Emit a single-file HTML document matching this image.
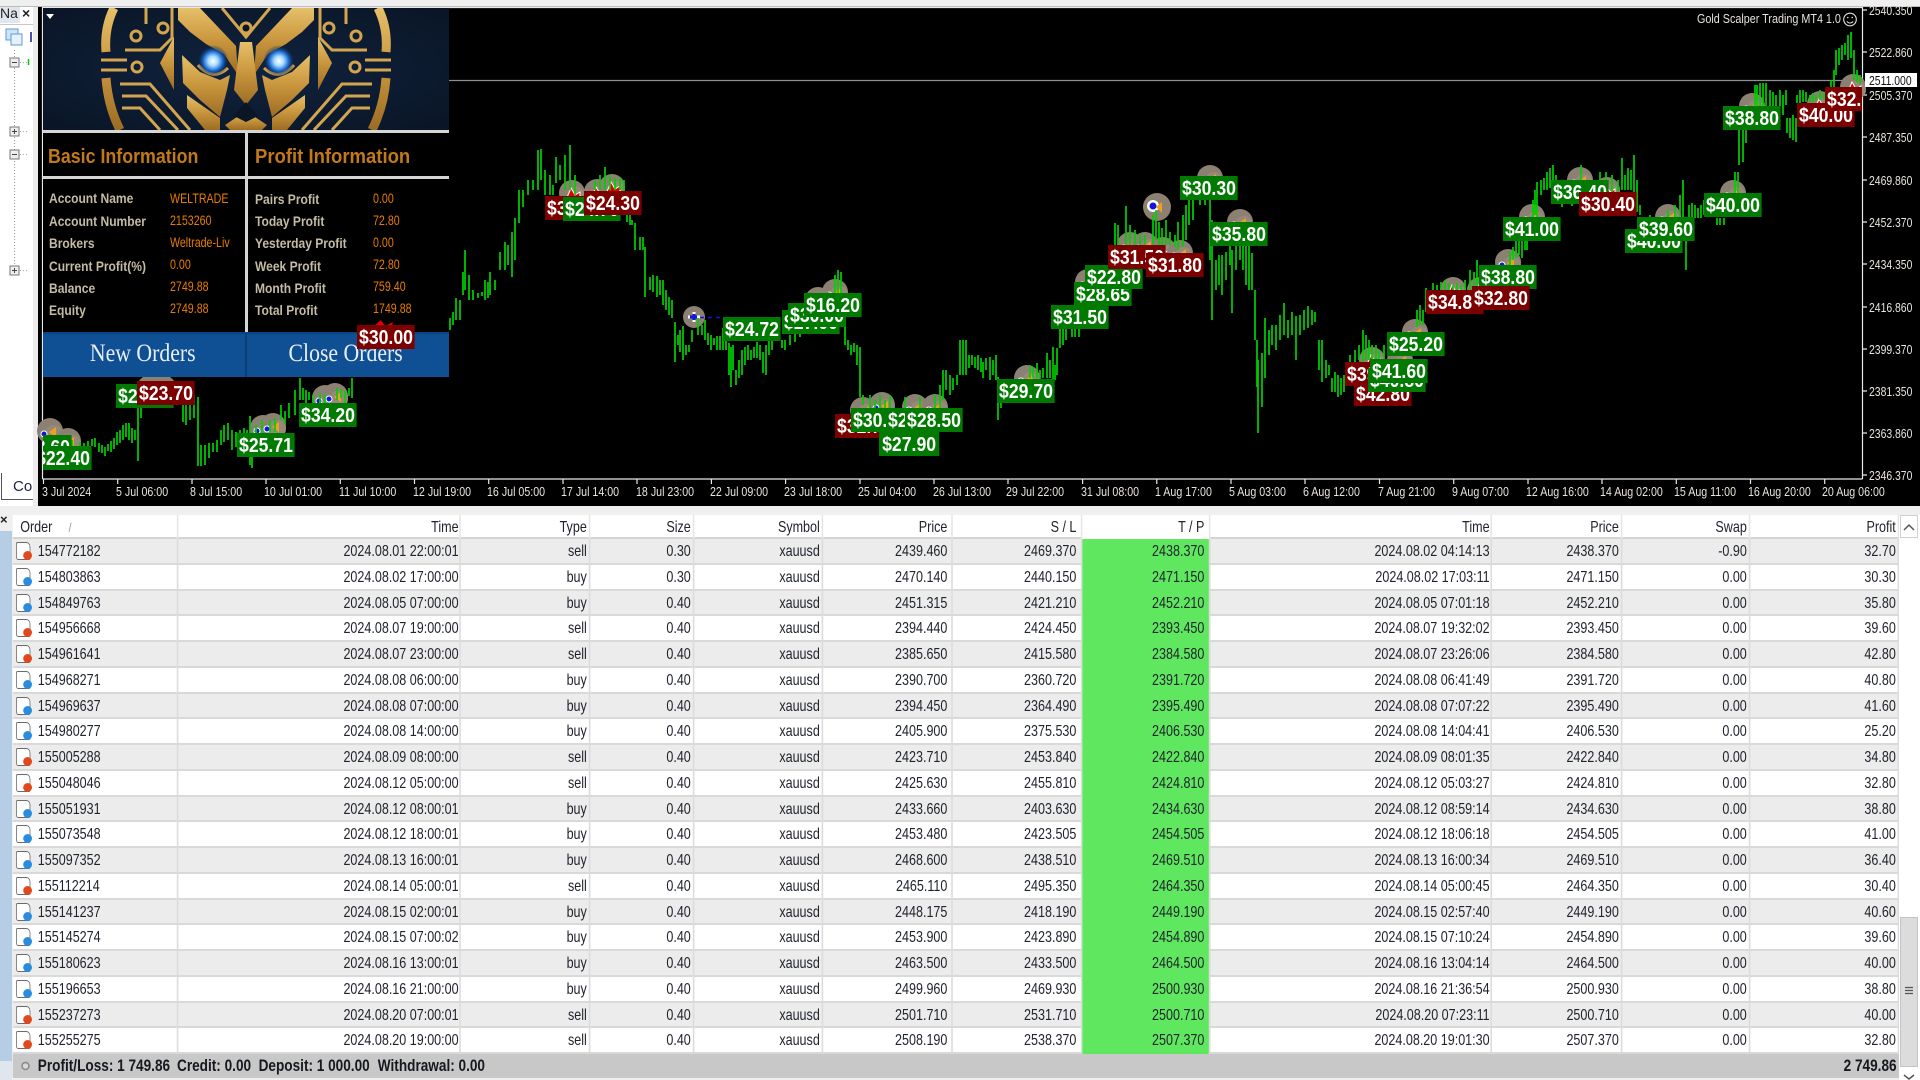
<!DOCTYPE html>
<html><head><meta charset="utf-8"><title>MT4</title>
<style>
html,body{margin:0;padding:0;width:1920px;height:1080px;overflow:hidden;background:#f0f0f0;font-family:"Liberation Sans",sans-serif}
.a{position:absolute}
#chart{position:absolute;left:38px;top:0;width:1882px;height:506px;background:#000}
svg{position:absolute;left:0;top:0;overflow:visible}
#clip{position:absolute;left:0;top:0;width:1920px;height:1080px;clip-path:inset(8px 58px 602px 43px)}
.g,.d{position:absolute;width:67.4px;height:24px;line-height:25px;font-size:20.5px;font-weight:bold;color:#fff;text-align:center;transform:scaleX(.86);transform-origin:0 0;white-space:nowrap;overflow:hidden}
.g{background:#007a00}.d{background:#7d0000}
.t{position:absolute;top:484px;color:#e8e4dc;font-size:13px;line-height:15px;transform:scaleX(.82);transform-origin:0 0;white-space:nowrap}
.p{position:absolute;left:1869px;color:#e8e4dc;font-size:13px;line-height:15px;transform:scaleX(.8);transform-origin:0 0;white-space:nowrap}
#panel{position:absolute;left:43px;top:8px;width:406px;height:369px;background:#000;overflow:hidden}
.hl{position:absolute;background:#d6d6d6}
.h{position:absolute;top:137px;font-size:20px;font-weight:bold;color:#c27a18;transform-origin:0 0;white-space:nowrap;line-height:24px}
.k{position:absolute;font-size:14px;font-weight:bold;color:#c4bba4;transform:scaleX(.86);transform-origin:0 0;white-space:nowrap;line-height:16px}
.v{position:absolute;font-size:13.5px;color:#e87c00;transform:scaleX(.79);transform-origin:0 0;white-space:nowrap;line-height:16px}
.btn{position:absolute;top:324px;height:45px;background:#0f4f93;color:#e8eef6;font-family:"Liberation Serif",serif;font-size:25px;line-height:43px;text-align:center}
.btn span{display:inline-block;transform:scaleX(.87)}
#tbl{position:absolute;left:0;top:515px;width:2400px;height:565px;transform:scaleX(.8);transform-origin:0 0;font-size:15.7px;color:#20242c}
.r{position:absolute;left:16.25px;display:grid;grid-template-columns:206.25px 353.75px 161.25px 130px 161.25px 162.5px 161.25px 160px 352.5px 162.5px 160px 186.25px;height:25.76px;line-height:26px;background:#fff;box-sizing:border-box;border-bottom:2px solid #d9d9d9}
.r span{text-align:right;padding-right:2px;border-right:2px solid #dcdcdc;white-space:nowrap;overflow:hidden}
.r span:nth-child(2),.r span:nth-child(9){padding-right:1px}
.r span:nth-child(6),.r span:nth-child(7),.r span:nth-child(8){padding-right:5px}
.r span:first-child{text-align:left;padding-left:31px;position:relative;overflow:visible}
.r.o{background:#ececec}
.r span:nth-child(8){background:#5fe85f}
.hd{background:#fff;height:24px;border-bottom:2px solid #d4d4d4}
.hd span{border-right:2px solid #e6e6e6}
.hd span:nth-child(8){background:#fff}
.hd span:first-child{padding-left:9px}
.i{display:block;position:absolute;left:4px;top:3px;width:16px;height:16px;border:1.5px solid #6a6a6a;border-radius:2px 5px 2px 3px;background:#fff}
.i::after{content:"";position:absolute;right:-3px;bottom:-1px;width:11px;height:9px;border-radius:50%;background:#e2481c}
.b::after{background:#2a8ce0}
#sum{position:absolute;left:16.25px;top:539px;width:2357.5px;height:24px;background:#c8c8c8;line-height:24px;font-weight:bold;font-size:17px;color:#15181e}
#sum span{position:absolute;white-space:nowrap}
</style></head><body>

<!-- top strip and left navigator -->
<div class="a" style="left:0;top:0;width:38px;height:506px;background:#fff"></div>
<div class="a" style="left:33px;top:0;width:5px;height:506px;background:#ececec"></div>
<div class="a" style="left:0;top:4px;width:20px;height:19px;background:#dfe6ee;font-size:14px;line-height:19px;overflow:hidden;color:#222">Na</div>
<div class="a" style="left:22px;top:5px;font-size:14px;line-height:17px;font-weight:bold;color:#222">×</div>
<div class="a" style="left:0;top:24px;width:33px;height:1px;background:#c8c8c8"></div>
<svg width="40" height="300" viewBox="0 0 40 300">
<rect x="6" y="29" width="12" height="11" fill="#cfe3f5" stroke="#5b9bd5"/><rect x="11" y="34" width="11" height="11" fill="#e6f1fb" stroke="#5b9bd5"/>
<path d="M31 32V42" stroke="#5050a8" stroke-width="2"/>
<path d="M14.5 50V264" stroke="#999" stroke-dasharray="1 2"/>
<g fill="#eee" stroke="#777"><rect x="10" y="58" width="9" height="9"/><rect x="10" y="127" width="9" height="9"/><rect x="10" y="150" width="9" height="9"/><rect x="10" y="266" width="9" height="9"/></g>
<path d="M12 62.5h5M12 131.5h5M14.5 129v5M12 154.5h5M12 270.5h5M14.500 268v5" stroke="#444"/>
<path d="M20 62.5h8M20 131.5h7M20 154.5h7M20 270.5h7" stroke="#aaa" stroke-dasharray="1 2"/>
<path d="M28.5 59v6" stroke="#0c0" stroke-width="1.5"/>
</svg>
<div class="a" style="left:1px;top:473px;width:32px;height:27px;background:#fff;border-left:1px solid #555;border-bottom:1px solid #555;box-sizing:border-box;font-size:15px;line-height:28px;padding-left:11px;overflow:hidden;color:#224">Cor</div>

<!-- chart -->
<div id="chart"></div>
<div class="a" style="left:0;top:0;width:1920px;height:6px;background:#efefef;border-bottom:1px solid #bbb"></div>
<svg width="1920" height="1080" viewBox="0 0 1920 1080">
<defs>
<g id="bb"><circle r="13" fill="#8b8072"/><circle cx="4" cy="3" r="9" fill="#97897a"/><path d="M6-4V6L-1 1Z" fill="#f0a020"/><circle cx="-6" cy="3" r="3" fill="#1414e0" stroke="#fff"/></g>
<g id="ss"><circle r="13" fill="#8b8072"/><circle cx="4" cy="3" r="9" fill="#97897a"/><path d="M-6 7L-1-5 3 2 8-1V7Z" fill="#e00000" stroke="#fff"/></g>
</defs>
<path d="M42.5 479V7.5H1862.5V479M42.5 479H1862.5" fill="none" stroke="#e8e8e8" stroke-width="1.2"/>
<path d="M448 80.5H1862" stroke="#8a8f96" stroke-width="1.3"/>
<path d="M1862 10h5M1862 52h5M1862 95h5M1862 137h5M1862 180h5M1862 222h5M1862 264h5M1862 307h5M1862 349h5M1862 391h5M1862 433h5M1862 475h5M43.5 479v5M117.7 479v5M192 479v5M266 479v5M340.3 479v5M414.5 479v5M488.7 479v5M563 479v5M637 479v5M711.4 479v5M785.6 479v5M860 479v5M934 479v5M1008 479v5M1082.6 479v5M1156.8 479v5M1231 479v5M1305 479v5M1379.5 479v5M1453.7 479v5M1528 479v5M1602 479v5M1676.3 479v5M1750.5 479v5M1824.7 479v5" stroke="#e8e8e8" stroke-width="1.2"/>
<g>
<use href="#bb" x="50" y="431"/><use href="#bb" x="68" y="441"/><use href="#ss" x="150" y="388"/><use href="#ss" x="163" y="388"/><use href="#bb" x="263" y="428"/><use href="#bb" x="273" y="426"/><use href="#bb" x="325" y="398"/><use href="#bb" x="335" y="396"/>
<use href="#ss" x="572" y="193"/><use href="#ss" x="597" y="192"/><use href="#ss" x="612" y="187"/>
<use href="#bb" x="835" y="292"/><use href="#bb" x="818" y="300"/><use href="#bb" x="863" y="410"/><use href="#bb" x="882" y="405"/><use href="#bb" x="915" y="407"/><use href="#bb" x="935" y="407"/>
<use href="#bb" x="1027" y="378"/><use href="#bb" x="1088" y="282"/><use href="#bb" x="1130" y="245"/><use href="#bb" x="1145" y="245"/><use href="#ss" x="1163" y="250"/><use href="#bb" x="1180" y="253"/><use href="#bb" x="1210" y="178"/><use href="#bb" x="1240" y="222"/>
<use href="#ss" x="1372" y="360"/><use href="#bb" x="1400" y="360"/><use href="#bb" x="1415" y="332"/><use href="#ss" x="1453" y="290"/><use href="#ss" x="1480" y="290"/><use href="#bb" x="1508" y="262"/>
<use href="#bb" x="1532" y="217"/><use href="#bb" x="1580" y="180"/><use href="#ss" x="1607" y="190"/><use href="#bb" x="1668" y="217"/><use href="#bb" x="1733" y="193"/><use href="#bb" x="1752" y="106"/><use href="#ss" x="1820" y="104"/><use href="#ss" x="1853" y="87"/>
<circle cx="694" cy="317" r="11" fill="#8b8072"/><path d="M688 317h12M694 312v10" stroke="#fff" stroke-width="3"/><path d="M690 317h7M694 314v6" stroke="#1414e0" stroke-width="3"/>
<path d="M700 317.500H723" stroke="#1414e0" stroke-width="1.500" stroke-dasharray="4 4"/>
<circle cx="1157" cy="207" r="14" fill="#8b8072"/><circle cx="1153" cy="206" r="6" fill="#fff"/><circle cx="1153" cy="206" r="3.500" fill="#1414e0"/><path d="M1162 202V213L1156 207Z" fill="#f0a020"/>
</g>
<path fill="none" stroke="#00d000" stroke-width="1.7" d="M45 440V446M72 440V450M80 442V448M84 443V449M88 441V447M92 439V446M95 438V447M99 443V452M102 445V453M105 447V456M108 444V451M111 441V452M114 438V449M117 432V445M120 430V443M123 425V440M126 423V437M129 423V440M132 428V443M135 430V440M138 396V461M141 393V418M183 405V422M186 405V425M190 400V420M194 395V418M198 397V466M201 445V466M205 445V465M209 443V458M213 443V452M217 440V452M221 430V445M224 425V442M228 423V440M232 430V450M236 432V447M240 430V446M244 428V444M247 430V445M250 416V465M252 440V468M256 425V445M262 420V440M270 420V432M275 418V432M281 405V420M285 411V424M289 403V418M295 390V415M300 378V400M303 388V400M306 390V405M309 392V400M313 395V403M320 393V404M325 395V405M337 388V400M341 389V398M345 390V403M349 388V396M352 378V398
M450 318V330M453 312V325M456 298V320M460 300V320M463 272V295M465 250V290M469 275V300M473 290V300M478 293V298M482 292V296M485 280V300M488 282V298M490 272V295M495 280V290M500 252V270M505 242V270M508 245V265M512 232V277M515 218V260M519 190V223M523 190V207M528 180V195M533 180V190M538 150V190M541 149V180M545 170V195M550 175V195M553 185V195M556 157V183M560 165V180M565 155V190M570 145V190M575 175V195M595 180V190M600 175V190M605 167V190M610 175V190M615 178V190M620 177V190M624 180V192M627 212V222M630 215V225M632 220V225M635 223V250M640 237V250M643 237V250M645 247V297M650 277V290M653 275V292M657 276V297M660 280V295M663 280V305M666 290V310M669 297V315M672 300V318M675 322V362M678 335V345M680 330V352M683 326V360M686 345V355M689 345V352M692 330V342M698 318V335M702 325V335M705 320V340M708 333V345M711 335V350M714 338V345M717 336V350M720 336V350M723 328V350M726 338V350M729 343V375M731 347V387M733 345V370M736 370V385M739 360V378M742 350V375M745 347V365M748 345V360M751 350V360M754 347V358M757 342V358M760 345V360M763 352V373M766 345V375M769 340V355M772 340V350M782 340V348M785 340V350M790 335V345M795 332V342M800 325V337M835 275V293M838 270V293M841 272V293M845 317V345M848 340V350M851 345V355M854 343V352M857 345V365M860 347V397M863 395V405M870 395V408M875 400V408M880 395V408M885 400V408M890 395V408M905 397V408M920 397V408M935 395V408M940 385V408M943 370V400M946 370V390M950 375V395M953 378V390M957 375V385M960 340V375M963 340V375M966 340V375M969 355V368M972 355V365M975 357V368M978 355V370M981 358V372
M983 362V378M986 358V370M990 357V380M993 360V375M996 355V380M998 377V420M1001 400V408M1030 365V378M1033 367V378M1037 363V378M1040 370V380M1043 368V378M1047 353V378M1050 360V378M1053 347V380M1055 365V380M1057 348V375M1060 328V348M1063 328V345M1066 328V340M1072 328V337M1075 328V337M1079 328V337
M1115 223V245M1118 225V245M1126 206V245M1130 225V245M1135 230V245M1140 233V245M1145 235V245M1153 215V245M1156 210V240M1159 222V245M1162 228V250M1166 220V245M1170 232V245M1175 235V247M1178 222V250M1183 215V247M1186 205V240M1189 200V225M1193 195V220M1200 195V205M1205 200V205M1210 200V260M1212 220V320M1216 260V290M1219 255V285M1222 255V295M1226 252V280M1230 245V265M1232 250V313M1236 245V270M1240 245V260M1243 245V270M1246 245V285M1249 245V290M1252 253V290M1255 290V340M1257 340V387M1258 360V433M1262 353V407M1265 318V378M1269 330V355M1272 325V345M1276 325V350M1280 315V340M1284 303V335M1288 320V338M1292 312V335M1296 316V360M1300 315V335M1304 310V330M1308 306V328M1312 310V325M1315 312V322M1319 340V370M1322 340V382M1326 360V378M1329 365V375M1332 378V392M1335 372V392M1338 375V397M1341 378V395M1344 375V392M1347 372V385M1350 355V365M1355 350V362M1359 345V360M1363 330V362M1366 335V360M1369 340V360M1372 345V360M1376 345V362M1379 350V362M1384 345V358
M1417 310V327M1420 305V325M1423 310V325M1426 288V312M1429 290V310M1433 283V292M1437 285V292M1441 282V290M1445 280V290M1449 283V290M1453 285V291M1457 283V290M1461 285V290M1465 280V290M1470 270V290M1474 272V290M1477 260V290M1480 268V285M1484 272V285
M1510 252V265M1513 247V260M1516 240V258M1519 240V255M1522 240V258M1525 240V250M1527 240V250M1533 200V217M1535 190V215M1537 182V217M1541 180V195M1544 178V190M1547 172V190M1550 168V188M1553 165V185M1556 175V180M1562 204V207M1572 204V206M1581 165V180M1600 172V185M1606 172V190M1612 175V195M1618 180V195M1622 158V190M1625 175V190M1628 168V190M1631 170V190M1634 155V200M1637 180V212M1640 205V215M1650 215V220M1668 210V220M1675 205V218M1680 195V217M1683 180V217M1686 240V270M1689 205V218M1692 203V218M1695 205V218M1698 208V218M1701 205V218M1704 200V215M1717 218V225M1720 218V225M1724 218V225M1735 172V193M1738 172V193M1739 130V165M1743 130V162M1746 130V143M1755 85V106M1757 85V106M1760 83V106M1763 83V106M1766 83V106M1770 90V106M1773 92V106M1776 95V106M1780 90V106M1783 95V115M1786 90V105M1787 118V133M1790 118V138M1793 115V140M1796 118V142M1797 95V103M1800 90V105M1803 90V102M1806 92V102M1810 95V102M1813 93V102M1816 95V100M1820 90V100M1824 93V100M1827 88V100M1831 80V87M1834 70V87M1836 50V75M1839 48V65M1842 45V60M1845 43V55M1848 35V60M1851 32V58M1854 50V80M1857 70V82M1860 75V84"/>
<circle cx="1850" cy="19.500" r="6.300" fill="none" stroke="#e8e4dc" stroke-width="1.100"/><circle cx="1847.800" cy="17.500" r=".8" fill="#e8e4dc"/><circle cx="1852.200" cy="17.500" r=".8" fill="#e8e4dc"/><path d="M1846.800 21.500Q1850 24.800 1853.200 21.500" fill="none" stroke="#e8e4dc"/>
</svg>

<div id="clip">
<div class="g" style="left:14px;top:435px">$28.60</div>
<div class="g" style="left:34px;top:446px">$22.40</div>
<div class="g" style="left:116px;top:384px">$26.40</div>
<div class="d" style="left:137px;top:381px">$23.70</div>
<div class="g" style="left:237px;top:433px">$25.71</div>
<div class="g" style="left:299px;top:403px">$34.20</div>
<div class="d" style="left:545px;top:196px">$32.50</div>
<div class="g" style="left:563px;top:197px">$24.70</div>
<div class="d" style="left:584px;top:191px">$24.30</div>
<div class="g" style="left:723px;top:317px">$24.72</div>
<div class="g" style="left:782px;top:310px">$27.00</div>
<div class="g" style="left:788px;top:303px">$30.00</div>
<div class="g" style="left:804px;top:293px">$16.20</div>
<div class="d" style="left:835px;top:414px">$32.70</div>
<div class="g" style="left:879px;top:432px;width:70px">$27.90</div>
<div class="g" style="left:851px;top:408px">$30.30</div>
<div class="g" style="left:886px;top:408px">$28.00</div>
<div class="g" style="left:905px;top:408px">$28.50</div>
<div class="g" style="left:997px;top:379px">$29.70</div>
<div class="g" style="left:1074px;top:282px">$28.65</div>
<div class="g" style="left:1051px;top:305px">$31.50</div>
<div class="g" style="left:1085px;top:265px">$22.80</div>
<div class="d" style="left:1108px;top:245px">$31.50</div>
<div class="d" style="left:1146px;top:253px">$31.80</div>
<div class="g" style="left:1180px;top:176px">$30.30</div>
<div class="g" style="left:1210px;top:222px">$35.80</div>
<div class="d" style="left:1345px;top:362px">$39.60</div>
<div class="d" style="left:1354px;top:382px">$42.80</div>
<div class="g" style="left:1368px;top:368px">$40.80</div>
<div class="g" style="left:1370px;top:359px">$41.60</div>
<div class="g" style="left:1387px;top:332px">$25.20</div>
<div class="d" style="left:1426px;top:290px">$34.80</div>
<div class="g" style="left:1479px;top:265px">$38.80</div>
<div class="d" style="left:1472px;top:286px">$32.80</div>
<div class="g" style="left:1503px;top:217px">$41.00</div>
<div class="g" style="left:1551px;top:180px">$36.40</div>
<div class="d" style="left:1579px;top:192px">$30.40</div>
<div class="g" style="left:1625px;top:229px">$40.00</div>
<div class="g" style="left:1637px;top:217px">$39.60</div>
<div class="g" style="left:1704px;top:193px">$40.00</div>
<div class="g" style="left:1723px;top:106px">$38.80</div>
<div class="d" style="left:1797px;top:103px">$40.00</div>
<div class="d" style="left:1825px;top:87px">$32.80</div>
</div>

<div class="a" style="left:1697px;top:11px;color:#e8e4dc;font-size:13px;line-height:16px;transform:scaleX(.83);transform-origin:0 0;white-space:nowrap">Gold Scalper Trading MT4 1.0</div>

<!-- price axis -->
<div class="p" style="top:3px">2540.350</div>
<div class="p" style="top:45px">2522.860</div>
<div class="p" style="top:88px">2505.370</div>
<div class="p" style="top:130px">2487.350</div>
<div class="p" style="top:173px">2469.860</div>
<div class="p" style="top:215px">2452.370</div>
<div class="p" style="top:257px">2434.350</div>
<div class="p" style="top:300px">2416.860</div>
<div class="p" style="top:342px">2399.370</div>
<div class="p" style="top:384px">2381.350</div>
<div class="p" style="top:426px">2363.860</div>
<div class="p" style="top:468px">2346.370</div>
<div class="a" style="left:1865px;top:73px;width:52px;height:14px;background:#fff;color:#111;font-size:13px;line-height:15px;overflow:hidden"><div style="transform:scaleX(.8);transform-origin:0 0;margin-left:4px;white-space:nowrap">2511.000</div></div>

<!-- time axis -->
<div class="t" style="left:42px">3 Jul 2024</div><div class="t" style="left:116px">5 Jul 06:00</div><div class="t" style="left:190px">8 Jul 15:00</div><div class="t" style="left:264px">10 Jul 01:00</div><div class="t" style="left:339px">11 Jul 10:00</div><div class="t" style="left:413px">12 Jul 19:00</div><div class="t" style="left:487px">16 Jul 05:00</div><div class="t" style="left:561px">17 Jul 14:00</div><div class="t" style="left:636px">18 Jul 23:00</div><div class="t" style="left:710px">22 Jul 09:00</div><div class="t" style="left:784px">23 Jul 18:00</div><div class="t" style="left:858px">25 Jul 04:00</div><div class="t" style="left:933px">26 Jul 13:00</div><div class="t" style="left:1006px">29 Jul 22:00</div><div class="t" style="left:1081px">31 Jul 08:00</div><div class="t" style="left:1155px">1 Aug 17:00</div><div class="t" style="left:1229px">5 Aug 03:00</div><div class="t" style="left:1303px">6 Aug 12:00</div><div class="t" style="left:1378px">7 Aug 21:00</div><div class="t" style="left:1452px">9 Aug 07:00</div><div class="t" style="left:1526px">12 Aug 16:00</div><div class="t" style="left:1600px">14 Aug 02:00</div><div class="t" style="left:1674px">15 Aug 11:00</div><div class="t" style="left:1748px">16 Aug 20:00</div><div class="t" style="left:1822px">20 Aug 06:00</div>

<!-- EA panel -->
<div id="panel">
<svg width="406" height="122" viewBox="43 8 406 122" style="left:0;top:0">
<defs>
<linearGradient id="au" x1="0" y1="0" x2="0" y2="1"><stop offset="0" stop-color="#e6c06a"/><stop offset=".5" stop-color="#c8953c"/><stop offset="1" stop-color="#9c6c24"/></linearGradient>
<radialGradient id="bg" cx=".5" cy=".5" r=".7"><stop offset="0" stop-color="#10233e"/><stop offset="1" stop-color="#0a1526"/></radialGradient>
<radialGradient id="eye"><stop offset="0" stop-color="#fff"/><stop offset=".3" stop-color="#a8dcff"/><stop offset=".6" stop-color="#1e6fd8"/><stop offset="1" stop-color="#0a1526" stop-opacity="0"/></radialGradient>
</defs>
<rect x="43" y="8" width="406" height="122" fill="url(#bg)"/>
<path d="M114 8Q104 28 106 52M106 78Q108 106 120 130M378 8Q388 28 386 52M386 78Q384 106 372 130" fill="none" stroke="url(#au)" stroke-width="9"/>
<g fill="none" stroke="#d2a54e" stroke-width="3">
<path d="M101 60H127M101 70H127M365 60H391M365 70H391"/>
<circle cx="137" cy="67" r="5"/><circle cx="136" cy="36" r="5"/><circle cx="163" cy="28" r="5"/><circle cx="355" cy="67" r="5"/><circle cx="356" cy="36" r="5"/><circle cx="329" cy="28" r="5"/>
<path d="M120 84H150L190 130M122 96H146L178 130M122 108H140L160 130M372 84H342L302 130M370 96H346L314 130M370 108H352L332 130"/>
<path d="M125 50H160L172 38V8M367 50H332L320 38V8M146 8V24M346 8V24"/>
<path d="M222 8L246 37 270 8M198 65Q213 82 228 68M294 65Q279 82 264 68"/>
</g>
<g fill="url(#au)">
<path d="M178 8H200L236 46 238 75 224 54 206 44 190 32 178 20Z"/><path d="M314 8H292L256 46 254 75 268 54 286 44 302 32 314 20Z"/>
<path d="M160 63L174 37V90Z"/><path d="M332 63L318 37V90Z"/>
<path d="M182 55L200 72 220 80 230 75 227 90 220 117 200 100 183 83Z"/><path d="M310 55L292 72 272 80 262 75 265 90 272 117 292 100 309 83Z"/>
<path d="M240 42H252L258 90 246 105 234 90Z"/>
<path d="M225 125L246 111 267 125 262 130H230Z"/>
<path d="M187 95L220 118V130H205L187 108Z"/><path d="M305 95L272 118V130H287L305 108Z"/>
</g>
<path d="M234 116L246 102 258 116 246 122Z" fill="#0a1526"/>
<circle cx="246" cy="28" r="5" fill="#0a1526" stroke="#d2a54e" stroke-width="3"/>
<circle cx="213" cy="61" r="16" fill="url(#eye)"/><circle cx="279" cy="61" r="16" fill="url(#eye)"/>
</svg>
<div class="hl" style="left:0;top:122px;width:406px;height:3px"></div>
<div class="hl" style="left:0;top:168px;width:406px;height:3px"></div>
<div class="hl" style="left:202px;top:125px;width:3px;height:199px"></div>
<div class="h" style="left:5px;top:137px;transform:scaleX(.89)">Basic Information</div>
<div class="h" style="left:212px;top:137px;transform:scaleX(.925)">Profit Information</div>
<div class="k" style="left:6px;top:182px">Account Name</div><div class="v" style="left:127px;top:183px">WELTRADE</div>
<div class="k" style="left:6px;top:205px">Account Number</div><div class="v" style="left:127px;top:205px">2153260</div>
<div class="k" style="left:6px;top:227px">Brokers</div><div class="v" style="left:127px;top:227px">Weltrade-Liv</div>
<div class="k" style="left:6px;top:250px">Current Profit(%)</div><div class="v" style="left:127px;top:249px">0.00</div>
<div class="k" style="left:6px;top:272px">Balance</div><div class="v" style="left:127px;top:271px">2749.88</div>
<div class="k" style="left:6px;top:294px">Equity</div><div class="v" style="left:127px;top:293px">2749.88</div>
<div class="k" style="left:212px;top:183px">Pairs Profit</div><div class="v" style="left:330px;top:183px">0.00</div>
<div class="k" style="left:212px;top:205px">Today Profit</div><div class="v" style="left:330px;top:205px">72.80</div>
<div class="k" style="left:212px;top:227px">Yesterday Profit</div><div class="v" style="left:330px;top:227px">0.00</div>
<div class="k" style="left:212px;top:250px">Week Profit</div><div class="v" style="left:330px;top:249px">72.80</div>
<div class="k" style="left:212px;top:272px">Month Profit</div><div class="v" style="left:330px;top:271px">759.40</div>
<div class="k" style="left:212px;top:294px">Total Profit</div><div class="v" style="left:330px;top:293px">1749.88</div>
<div class="btn" style="left:0;width:200px"><span>New Orders</span></div>
<div class="btn" style="left:200px;width:206px"><span>Close Orders</span></div>
<div class="a" style="left:202px;top:324px;width:2px;height:45px;background:#0a3c78"></div>
<div class="a" style="left:0;top:324px;width:406px;height:2px;background:#0b4484"></div>
</div>
<svg width="1920" height="400" viewBox="0 0 1920 400"><path d="M374 326L381 320 385 326 393 322 392 326Z" fill="#e00000"/><path d="M46 14h8l-4 5Z" fill="#fff"/></svg>
<div class="d" style="left:357px;top:325px">$30.00</div>

<!-- terminal -->
<div class="a" style="left:0;top:506px;width:1920px;height:9px;background:#f0f0f0"></div>
<div class="a" style="left:0;top:513px;font-size:13px;font-weight:bold;line-height:14px;color:#222">×</div>
<div class="a" style="left:0;top:531px;width:12px;height:530px;background:#b6cde6"></div>
<div class="a" style="left:0;top:1061px;width:12px;height:19px;background:#dfe6ee"></div>
<div id="tbl">
<div class="r hd" style="top:0"><span>Order <span style="border:0;padding:0 0 0 16px;color:#999;font-size:13px">/</span></span><span>Time</span><span>Type</span><span>Size</span><span>Symbol</span><span>Price</span><span>S / L</span><span>T / P</span><span>Time</span><span>Price</span><span>Swap</span><span>Profit</span></div>
<div class="r o" style="top:24px"><span><i class="i"></i>154772182</span><span>2024.08.01 22:00:01</span><span>sell</span><span>0.30</span><span>xauusd</span><span>2439.460</span><span>2469.370</span><span>2438.370</span><span>2024.08.02 04:14:13</span><span>2438.370</span><span>-0.90</span><span>32.70</span></div>
<div class="r" style="top:49.76px"><span><i class="i b"></i>154803863</span><span>2024.08.02 17:00:00</span><span>buy</span><span>0.30</span><span>xauusd</span><span>2470.140</span><span>2440.150</span><span>2471.150</span><span>2024.08.02 17:03:11</span><span>2471.150</span><span>0.00</span><span>30.30</span></div>
<div class="r o" style="top:75.52px"><span><i class="i b"></i>154849763</span><span>2024.08.05 07:00:00</span><span>buy</span><span>0.40</span><span>xauusd</span><span>2451.315</span><span>2421.210</span><span>2452.210</span><span>2024.08.05 07:01:18</span><span>2452.210</span><span>0.00</span><span>35.80</span></div>
<div class="r" style="top:101.28px"><span><i class="i"></i>154956668</span><span>2024.08.07 19:00:00</span><span>sell</span><span>0.40</span><span>xauusd</span><span>2394.440</span><span>2424.450</span><span>2393.450</span><span>2024.08.07 19:32:02</span><span>2393.450</span><span>0.00</span><span>39.60</span></div>
<div class="r o" style="top:127.04px"><span><i class="i"></i>154961641</span><span>2024.08.07 23:00:00</span><span>sell</span><span>0.40</span><span>xauusd</span><span>2385.650</span><span>2415.580</span><span>2384.580</span><span>2024.08.07 23:26:06</span><span>2384.580</span><span>0.00</span><span>42.80</span></div>
<div class="r" style="top:152.8px"><span><i class="i b"></i>154968271</span><span>2024.08.08 06:00:00</span><span>buy</span><span>0.40</span><span>xauusd</span><span>2390.700</span><span>2360.720</span><span>2391.720</span><span>2024.08.08 06:41:49</span><span>2391.720</span><span>0.00</span><span>40.80</span></div>
<div class="r o" style="top:178.56px"><span><i class="i b"></i>154969637</span><span>2024.08.08 07:00:00</span><span>buy</span><span>0.40</span><span>xauusd</span><span>2394.450</span><span>2364.490</span><span>2395.490</span><span>2024.08.08 07:07:22</span><span>2395.490</span><span>0.00</span><span>41.60</span></div>
<div class="r" style="top:204.32px"><span><i class="i b"></i>154980277</span><span>2024.08.08 14:00:00</span><span>buy</span><span>0.40</span><span>xauusd</span><span>2405.900</span><span>2375.530</span><span>2406.530</span><span>2024.08.08 14:04:41</span><span>2406.530</span><span>0.00</span><span>25.20</span></div>
<div class="r o" style="top:230.08px"><span><i class="i"></i>155005288</span><span>2024.08.09 08:00:00</span><span>sell</span><span>0.40</span><span>xauusd</span><span>2423.710</span><span>2453.840</span><span>2422.840</span><span>2024.08.09 08:01:35</span><span>2422.840</span><span>0.00</span><span>34.80</span></div>
<div class="r" style="top:255.84px"><span><i class="i"></i>155048046</span><span>2024.08.12 05:00:00</span><span>sell</span><span>0.40</span><span>xauusd</span><span>2425.630</span><span>2455.810</span><span>2424.810</span><span>2024.08.12 05:03:27</span><span>2424.810</span><span>0.00</span><span>32.80</span></div>
<div class="r o" style="top:281.6px"><span><i class="i b"></i>155051931</span><span>2024.08.12 08:00:01</span><span>buy</span><span>0.40</span><span>xauusd</span><span>2433.660</span><span>2403.630</span><span>2434.630</span><span>2024.08.12 08:59:14</span><span>2434.630</span><span>0.00</span><span>38.80</span></div>
<div class="r" style="top:307.36px"><span><i class="i b"></i>155073548</span><span>2024.08.12 18:00:01</span><span>buy</span><span>0.40</span><span>xauusd</span><span>2453.480</span><span>2423.505</span><span>2454.505</span><span>2024.08.12 18:06:18</span><span>2454.505</span><span>0.00</span><span>41.00</span></div>
<div class="r o" style="top:333.12px"><span><i class="i b"></i>155097352</span><span>2024.08.13 16:00:01</span><span>buy</span><span>0.40</span><span>xauusd</span><span>2468.600</span><span>2438.510</span><span>2469.510</span><span>2024.08.13 16:00:34</span><span>2469.510</span><span>0.00</span><span>36.40</span></div>
<div class="r" style="top:358.88px"><span><i class="i"></i>155112214</span><span>2024.08.14 05:00:01</span><span>sell</span><span>0.40</span><span>xauusd</span><span>2465.110</span><span>2495.350</span><span>2464.350</span><span>2024.08.14 05:00:45</span><span>2464.350</span><span>0.00</span><span>30.40</span></div>
<div class="r o" style="top:384.64px"><span><i class="i b"></i>155141237</span><span>2024.08.15 02:00:01</span><span>buy</span><span>0.40</span><span>xauusd</span><span>2448.175</span><span>2418.190</span><span>2449.190</span><span>2024.08.15 02:57:40</span><span>2449.190</span><span>0.00</span><span>40.60</span></div>
<div class="r" style="top:410.4px"><span><i class="i b"></i>155145274</span><span>2024.08.15 07:00:02</span><span>buy</span><span>0.40</span><span>xauusd</span><span>2453.900</span><span>2423.890</span><span>2454.890</span><span>2024.08.15 07:10:24</span><span>2454.890</span><span>0.00</span><span>39.60</span></div>
<div class="r o" style="top:436.16px"><span><i class="i b"></i>155180623</span><span>2024.08.16 13:00:01</span><span>buy</span><span>0.40</span><span>xauusd</span><span>2463.500</span><span>2433.500</span><span>2464.500</span><span>2024.08.16 13:04:14</span><span>2464.500</span><span>0.00</span><span>40.00</span></div>
<div class="r" style="top:461.92px"><span><i class="i b"></i>155196653</span><span>2024.08.16 21:00:00</span><span>buy</span><span>0.40</span><span>xauusd</span><span>2499.960</span><span>2469.930</span><span>2500.930</span><span>2024.08.16 21:36:54</span><span>2500.930</span><span>0.00</span><span>38.80</span></div>
<div class="r o" style="top:487.68px"><span><i class="i"></i>155237273</span><span>2024.08.20 07:00:01</span><span>sell</span><span>0.40</span><span>xauusd</span><span>2501.710</span><span>2531.710</span><span>2500.710</span><span>2024.08.20 07:23:11</span><span>2500.710</span><span>0.00</span><span>40.00</span></div>
<div class="r" style="top:513.44px"><span><i class="i"></i>155255275</span><span>2024.08.20 19:00:00</span><span>sell</span><span>0.40</span><span>xauusd</span><span>2508.190</span><span>2538.370</span><span>2507.370</span><span>2024.08.20 19:01:30</span><span>2507.370</span><span>0.00</span><span>32.80</span></div>
<div id="sum"><span style="left:31px">Profit/Loss: 1 749.86</span><span style="left:205px">Credit: 0.00</span><span style="left:307px">Deposit: 1 000.00</span><span style="left:456px">Withdrawal: 0.00</span><span style="right:3px">2 749.86</span></div>
</div>
<svg width="40" height="1080" viewBox="0 0 40 1080"><circle cx="25.500" cy="1066" r="3.500" fill="#d8d8d8" stroke="#888" stroke-width="1.500"/></svg>

<!-- scrollbar -->
<div class="a" style="left:1899px;top:515px;width:21px;height:565px;background:#fff"></div>
<div class="a" style="left:1900px;top:515px;width:18px;height:23px;background:#fff;border:1px solid #d0d0d0;box-sizing:border-box"></div>
<div class="a" style="left:1900px;top:917px;width:18px;height:150px;background:#dcdcdc;border:1px solid #c4c4c4;box-sizing:border-box"></div>
<svg width="1920" height="1080" viewBox="0 0 1920 1080"><path d="M1904 530L1909 525 1914 530" fill="none" stroke="#555" stroke-width="1.500"/><path d="M1904 1075L1909 1079 1914 1075" fill="none" stroke="#555" stroke-width="1.500"/><path d="M1905 987.500h8M1905 990.500h8M1905 993.500h8" stroke="#555" stroke-width="1.200"/></svg>
</body></html>
